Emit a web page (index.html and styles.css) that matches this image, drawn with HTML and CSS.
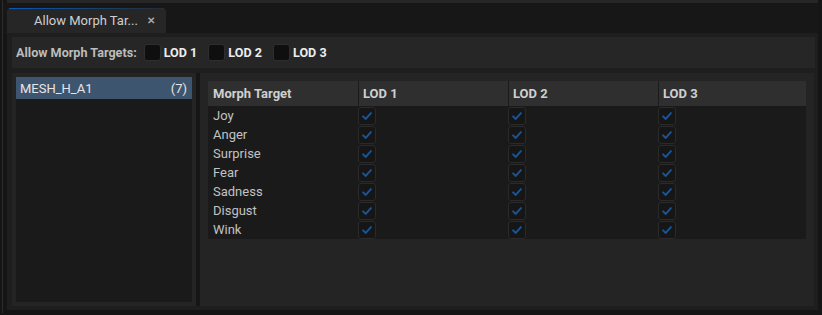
FILE: index.html
```html
<!DOCTYPE html>
<html lang="en">
<head>
    <meta charset="UTF-8">
    <title>Allow Morph Targets</title>
    <link rel="stylesheet" href="styles.css">
</head>
<body>
    <div class="frame">
        <div class="topline"></div>
        <div class="tabstrip">
            <div class="tab">
                <span class="tab-title">Allow Morph Tar...</span>
                <span class="tab-close">&#x2715;</span>
            </div>
        </div>

        <div class="content">
            <div class="toolbar">
                <span class="toolbar-label">Allow Morph Targets:</span>
                <label class="lod-toggle"><span class="box"></span>LOD 1</label>
                <label class="lod-toggle"><span class="box"></span>LOD 2</label>
                <label class="lod-toggle"><span class="box"></span>LOD 3</label>
            </div>

            <div class="main">
                <div class="list-panel">
                    <div class="list">
                        <div class="list-item selected">
                            <span>MESH_H_A1</span>
                            <span>(7)</span>
                        </div>
                    </div>
                </div>
                <div class="splitter"></div>
                <div class="table-panel">
                    <table class="morph-table">
                        <thead>
                            <tr>
                                <th>Morph Target</th>
                                <th>LOD 1</th>
                                <th>LOD 2</th>
                                <th>LOD 3</th>
                            </tr>
                        </thead>
                        <tbody id="morphBody"></tbody>
                    </table>
                </div>
            </div>
        </div>
    </div>

    <script>
        const MORPHS = ['Joy', 'Anger', 'Surprise', 'Fear', 'Sadness', 'Disgust', 'Wink'];

        const check = `<span class="check"><svg viewBox="0 0 18 18" width="18" height="18">
            <path d="M4.6 9.4 L7.6 12.3 L13.4 5.8" fill="none" stroke="#1a5596" stroke-width="2.2" stroke-linecap="round" stroke-linejoin="round"/>
        </svg></span>`;

        // 渲染表格
        document.getElementById('morphBody').innerHTML = MORPHS.map(name => `
            <tr>
                <td class="name">${name}</td>
                <td>${check}</td>
                <td>${check}</td>
                <td>${check}</td>
            </tr>
        `).join('');
    </script>
</body>
</html>
```

FILE: styles.css
```css
body {
    margin: 0;
    background: #151515;
    font-family: Roboto, "Liberation Sans", sans-serif;
    font-size: 13px;
    color: #c4c4c4;
    overflow: hidden;
}
.frame {
    margin-left: 2px;
    width: 815px;
    height: 313px;
    border-left: 1px solid #2c2c2c;
}
.topline {
    height: 3px;
    margin-left: 4px;
    background: #262626;
}
.tabstrip {
    height: 30px;
    background: #171717;
    padding-left: 4px;
    box-sizing: border-box;
    display: flex;
    align-items: flex-end;
}
.tab {
    width: 159px;
    height: 25px;
    background: #262626;
    border-radius: 4px 4px 0 0;
    position: relative;
    display: flex;
    align-items: center;
    box-sizing: border-box;
    padding-left: 27px;
}
.tab::before {
    content: "";
    position: absolute;
    top: 0;
    left: 2px;
    right: 2px;
    height: 1px;
    background: linear-gradient(to right, #0c57b3, #184270 55%, #262c33);
}
.tab-title {
    color: #cfcfcf;
    width: 113px;
}
.tab-close {
    color: #a8a8a8;
    font-size: 10px;
    font-weight: bold;
}
.content {
    margin-left: 4px;
    height: 277px;
    background: #1e1e1e;
    padding: 4px 3px 4px 5px;
    box-sizing: border-box;
}
.toolbar {
    height: 31px;
    background: #262626;
    display: flex;
    align-items: center;
    padding-left: 4px;
    font-weight: bold;
    font-size: 12.6px;
}
.toolbar-label {
    color: #bcbcbc;
    margin-right: 7px;
}
.lod-toggle {
    display: flex;
    align-items: center;
    color: #ececec;
    margin-right: 11px;
}
.box {
    width: 15px;
    height: 15px;
    background: #0f0f0f;
    border: 1px solid #2e2e2e;
    border-radius: 3px;
    margin-right: 3px;
}
.main {
    display: flex;
    margin-top: 5px;
    height: 233px;
}
.list-panel {
    width: 184px;
    background: #242424;
    padding: 4px;
    box-sizing: border-box;
}
.list {
    height: 100%;
    background: #1a1a1a;
}
.list-item {
    height: 22px;
    display: flex;
    align-items: center;
    justify-content: space-between;
    padding: 0 5px 0 4px;
    color: #e6e6e6;
}
.selected {
    background: #3e556f;
}
.splitter {
    width: 4px;
    background: #161616;
}
.table-panel {
    width: 614px;
    background: #242424;
    padding: 8px 8px 0 8px;
    box-sizing: border-box;
}
.morph-table {
    width: 598px;
    border-collapse: collapse;
    table-layout: fixed;
    background: #1a1a1a;
}
.morph-table th {
    height: 24px;
    padding: 0 0 1px 5px;
    background: #2f2f2f;
    color: #cfcfcf;
    font-weight: bold;
    text-align: left;
    width: 145px;
    box-shadow: inset 1px 0 #1b1b1b;
}
.morph-table th:first-child {
    box-shadow: none;
}
.morph-table th:last-child {
    width: 143px;
}
.morph-table td {
    height: 19px;
    padding: 0;
    line-height: 19px;
}
.morph-table td.name {
    padding-left: 5px;
    color: #c2c2c2;
}
.check {
    display: block;
    width: 16px;
    height: 16px;
    background: #161616;
    border: 1px solid #2a2a2a;
    border-radius: 3px;
}
.check svg {
    display: block;
    width: 16px;
    height: 16px;
}
```
